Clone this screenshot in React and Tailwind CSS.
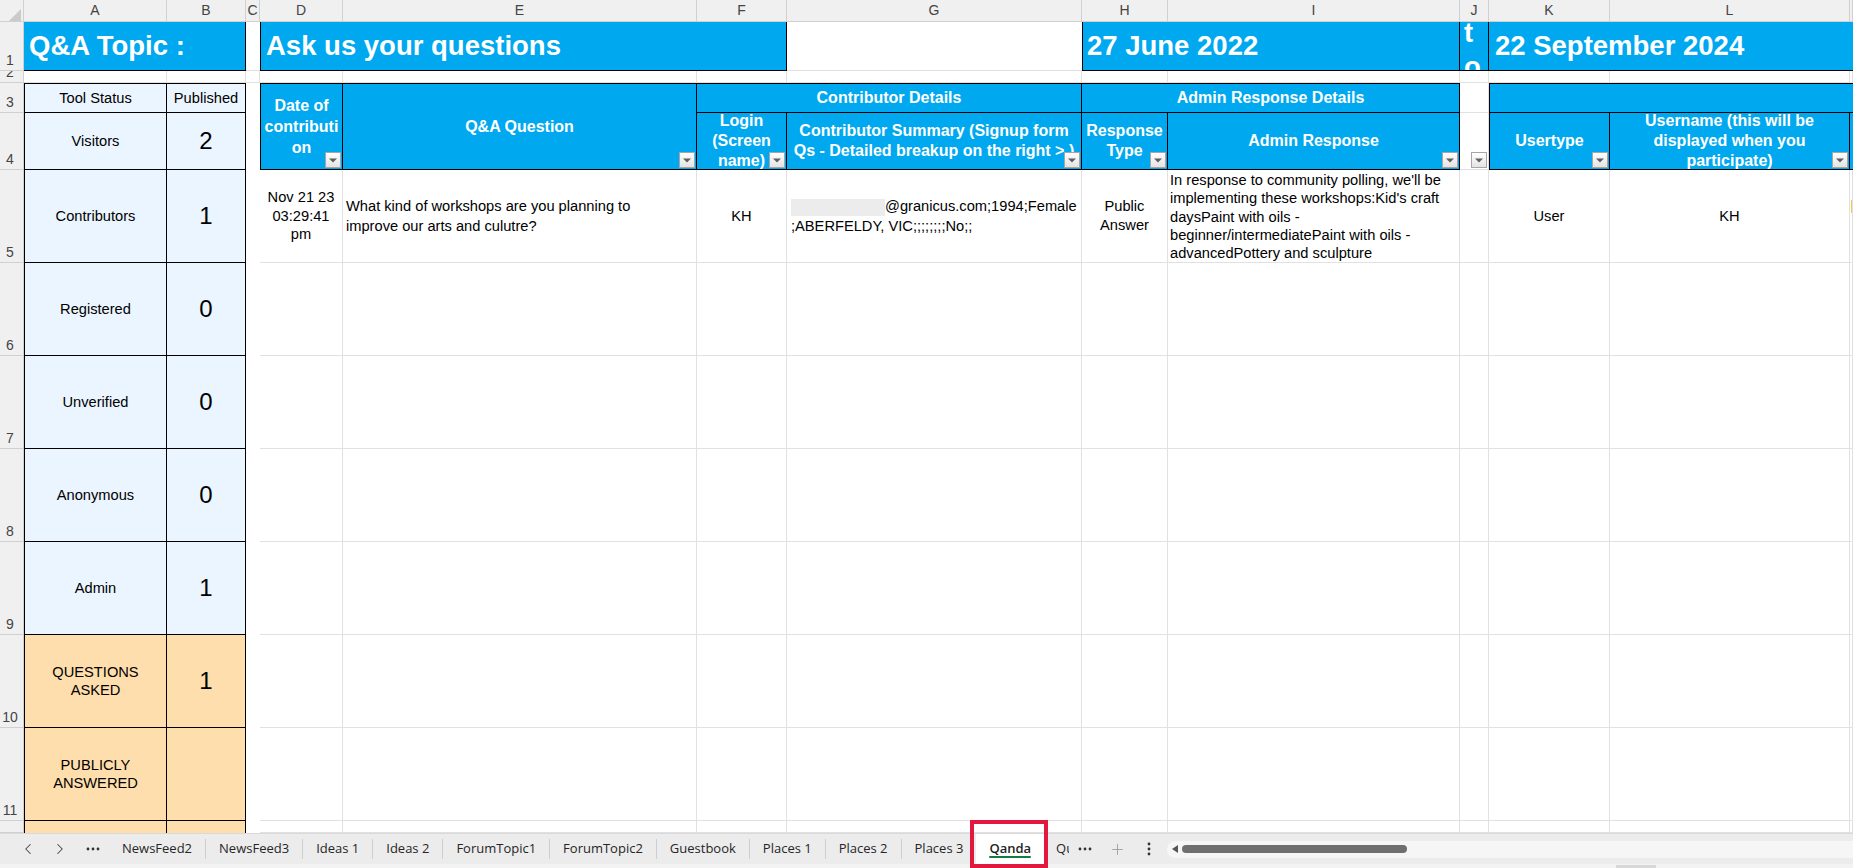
import React from "react";
import { ChevronLeft, ChevronRight, Plus } from "lucide-react";

const GRID = "border-r border-b border-[#e1e1e1]";
const BLUE = "bg-[#00a8f0] text-white border-black";
const HEAD = "bg-[#00a8f0] text-white border-black font-bold text-[16px] leading-[20px] text-center flex items-center justify-center whitespace-nowrap";

const colHeads = [
  ["A", "col-start-2"],
  ["B", "col-start-3"],
  ["C", "col-start-4"],
  ["D", "col-start-5"],
  ["E", "col-start-6"],
  ["F", "col-start-7"],
  ["G", "col-start-8"],
  ["H", "col-start-9"],
  ["I", "col-start-10"],
  ["J", "col-start-11"],
  ["K", "col-start-12"],
  ["L", "col-start-13"],
  ["", "col-start-14"],
];

const rowHeads = [
  ["1", "row-start-2"],
  ["2", "row-start-3"],
  ["3", "row-start-4"],
  ["4", "row-start-5"],
  ["5", "row-start-6"],
  ["6", "row-start-7"],
  ["7", "row-start-8"],
  ["8", "row-start-9"],
  ["9", "row-start-10"],
  ["10", "row-start-11"],
  ["11", "row-start-12"],
  ["", "row-start-13"],
];

const stats = [
  { label: "Visitors", value: "2", row: "row-start-5", bg: "bg-[#ebf5ff]" },
  { label: "Contributors", value: "1", row: "row-start-6", bg: "bg-[#ebf5ff]" },
  { label: "Registered", value: "0", row: "row-start-7", bg: "bg-[#ebf5ff]" },
  { label: "Unverified", value: "0", row: "row-start-8", bg: "bg-[#ebf5ff]" },
  { label: "Anonymous", value: "0", row: "row-start-9", bg: "bg-[#ebf5ff]" },
  { label: "Admin", value: "1", row: "row-start-10", bg: "bg-[#ebf5ff]" },
  { label: <>QUESTIONS<br />ASKED</>, value: "1", row: "row-start-11", bg: "bg-[#ffdead]" },
  { label: <>PUBLICLY<br />ANSWERED</>, value: "", row: "row-start-12", bg: "bg-[#ffdead]" },
  { label: "", value: "", row: "row-start-13", bg: "bg-[#ffdead]" },
];

const bodyRows = ["row-start-7", "row-start-8", "row-start-9", "row-start-10", "row-start-11", "row-start-12", "row-start-13"];
const bodyCols = ["col-start-5", "col-start-6", "col-start-7", "col-start-8", "col-start-9", "col-start-10", "col-start-11", "col-start-12", "col-start-13", "col-start-14"];
const row2Cols = ["col-start-2", "col-start-3", "col-start-4", "col-start-5", "col-start-6", "col-start-7", "col-start-8", "col-start-9", "col-start-10", "col-start-11", "col-start-12", "col-start-13", "col-start-14"];

const tabs = ["NewsFeed2", "NewsFeed3", "Ideas 1", "Ideas 2", "ForumTopic1", "ForumTopic2", "Guestbook", "Places 1", "Places 2", "Places 3"];

const Cell = ({ className = "", children }) => (
  <div className={`relative overflow-hidden ${className}`}>{children}</div>
);

// little autofilter dropdown in the corner of header cells
const FilterBtn = () => (
  <span className="absolute right-[1px] bottom-[1px] w-[16px] h-[16px] border border-[#a6a6a6] bg-linear-to-b from-white to-[#e4e4e4] flex items-center justify-center">
    <svg width="8" height="5" viewBox="0 0 8 5">
      <path d="M0 0.5h8L4 4.5z" fill="#5f5f5f" />
    </svg>
  </span>
);

const Dots = ({ vertical }) =>
  vertical ? (
    <svg width="4" height="14" viewBox="0 0 4 14">
      <circle cx="2" cy="2" r="1.4" fill="#333" />
      <circle cx="2" cy="7" r="1.4" fill="#333" />
      <circle cx="2" cy="12" r="1.4" fill="#333" />
    </svg>
  ) : (
    <svg width="14" height="4" viewBox="0 0 14 4">
      <circle cx="2" cy="2" r="1.4" fill="#333" />
      <circle cx="7" cy="2" r="1.4" fill="#333" />
      <circle cx="12" cy="2" r="1.4" fill="#333" />
    </svg>
  );

function TabBar() {
  return (
    <div className="flex flex-col font-['Open_Sans',sans-serif]">
      <div className="h-[31px] bg-[#ececec] border-t border-[#d9d9d9] flex items-center text-[13px] text-[#262626]">
        <div className="w-[12px]" />
        <div className="w-[32px] flex justify-center">
          <ChevronLeft size={18} strokeWidth={1.4} className="text-[#444]" />
        </div>
        <div className="w-[32px] flex justify-center">
          <ChevronRight size={18} strokeWidth={1.4} className="text-[#444]" />
        </div>
        <div className="w-[33px] flex justify-center">
          <Dots />
        </div>
        {tabs.map((t, i) => (
          <React.Fragment key={t}>
            <span className="px-[13px] whitespace-nowrap">{t}</span>
            {i < tabs.length - 1 && <span className="w-px h-[20px] bg-[#cfcfcf]" />}
          </React.Fragment>
        ))}
        <div className="relative h-full px-[13px] bg-white flex items-center font-semibold text-[#1f1f1f]">
          Qanda
          <span className="absolute left-[13px] right-[13px] bottom-[6px] h-[2px] rounded-full bg-[#107c41]" />
          <span className="absolute -left-[6px] -right-[4px] -top-[14px] -bottom-[4px] border-4 border-[#e2183f]" />
        </div>
        <div className="w-[25px] pl-[12px] overflow-hidden whitespace-nowrap">Qu</div>
        <div className="w-[32px] flex justify-center">
          <Dots />
        </div>
        <div className="w-[32px] flex justify-center">
          <Plus size={17} strokeWidth={1.2} className="text-[#9a9a9a]" />
        </div>
        <div className="w-[32px] flex justify-center">
          <Dots vertical />
        </div>
        <div className="ml-[2px] flex-1 h-[17px] bg-[#f6f6f6] rounded-l-full flex items-center pl-[5px]">
          <svg width="6" height="8" viewBox="0 0 6 8">
            <path d="M6 0v8L0 4z" fill="#555" />
          </svg>
          <span className="ml-[4px] w-[225px] h-[8px] rounded-full bg-[#6f6f6f]" />
        </div>
      </div>
      <div className="h-[4px] bg-[#f3f3f3] flex">
        <span className="ml-[1616px] w-[40px] h-[3px] mt-[1px] bg-[#d8d8d8]" />
      </div>
    </div>
  );
}

export default function App() {
  return (
    <div className="w-[1853px] h-[868px] overflow-hidden bg-white flex flex-col font-['Liberation_Sans',Arial,sans-serif] text-black">
      <div className="grid grid-cols-[24px_143px_79px_14px_83px_354px_90px_295px_86px_292px_29px_121px_240px_1fr] grid-rows-[22px_49px_12px_30px_57px_93px_93px_93px_93px_93px_93px_93px_12px] h-[833px] overflow-hidden">
        {/* corner */}
        <Cell className="col-start-1 row-start-1 bg-[#f0f0f0] border-r border-b border-[#d0d0d0]">
          <svg className="absolute left-[9px] top-[9px]" width="12" height="12" viewBox="0 0 12 12">
            <path d="M12 0v12H0z" fill="#cacaca" />
          </svg>
        </Cell>

        {/* column letters */}
        {colHeads.map(([l, c]) => (
          <Cell
            key={c}
            className={`${c} row-start-1 bg-[#f0f0f0] border-r border-b border-[#d0d0d0] flex items-center justify-center text-[14px] text-[#444]`}
          >
            {l}
          </Cell>
        ))}

        {/* row numbers */}
        {rowHeads.map(([n, r]) => (
          <Cell
            key={r}
            className={`col-start-1 ${r} bg-[#f0f0f0] border-r border-b border-[#d0d0d0] flex items-end justify-center pr-[3px] pb-[2px] text-[14px] leading-[16px] text-[#444]`}
          >
            {n}
          </Cell>
        ))}

        {/* row 1 */}
        <Cell className={`col-start-2 col-span-2 row-start-2 ${BLUE} border-r border-b flex items-center px-[5px] text-[27.5px] font-bold whitespace-nowrap`}>
          Q&amp;A Topic :
        </Cell>
        <Cell className="col-start-4 row-start-2 border-b border-[#e1e1e1]" />
        <Cell className={`col-start-5 col-span-3 row-start-2 ${BLUE} border-l border-r border-b flex items-center px-[5px] text-[27.5px] font-bold whitespace-nowrap`}>
          Ask us your questions
        </Cell>
        <Cell className="col-start-8 row-start-2 border-b border-[#e1e1e1]" />
        <Cell className={`col-start-9 col-span-2 row-start-2 ${BLUE} border-l border-r border-b flex items-center px-[4px] text-[27.5px] font-bold whitespace-nowrap`}>
          27 June 2022
        </Cell>
        <Cell className={`col-start-11 row-start-2 ${BLUE} border-r border-b`}>
          <div className="pl-[4px] -mt-[6px] leading-[34px] text-[27.5px] font-bold">
            t<br />o
          </div>
        </Cell>
        <Cell className={`col-start-12 col-span-3 row-start-2 ${BLUE} border-b flex items-center px-[6px] text-[27.5px] font-bold whitespace-nowrap`}>
          22 September 2024
        </Cell>

        {/* row 2 */}
        {row2Cols.map((c) => (
          <Cell key={c} className={`${c} row-start-3 ${GRID}`} />
        ))}

        {/* row 3 */}
        <Cell className="col-start-2 row-start-4 bg-[#ebf5ff] border-l border-t border-r border-b border-black flex items-center justify-center text-[14.67px]">
          Tool Status
        </Cell>
        <Cell className="col-start-3 row-start-4 bg-[#ebf5ff] border-t border-r border-b border-black flex items-center justify-center text-[14.67px]">
          Published
        </Cell>
        <Cell className={`col-start-5 row-start-4 row-span-2 ${HEAD} border-l border-t border-r border-b leading-[21px]`}>
          <div>
            Date of<br />contributi<br />on
          </div>
          <FilterBtn />
        </Cell>
        <Cell className={`col-start-6 row-start-4 row-span-2 ${HEAD} border-t border-r border-b`}>
          Q&amp;A Question
          <FilterBtn />
        </Cell>
        <Cell className={`col-start-7 col-span-2 row-start-4 ${HEAD} border-t border-r border-b`}>
          Contributor Details
        </Cell>
        <Cell className={`col-start-9 col-span-2 row-start-4 ${HEAD} border-t border-r border-b`}>
          Admin Response Details
        </Cell>
        <Cell className={`col-start-11 row-start-4 ${GRID}`} />
        <Cell className={`col-start-12 col-span-3 row-start-4 ${BLUE} border-l border-t border-b`} />

        {/* row 4 headers */}
        <Cell className={`col-start-7 row-start-5 ${HEAD} border-r border-b leading-[20.5px]`}>
          <div>
            Login<br />(Screen<br />name)
          </div>
          <FilterBtn />
        </Cell>
        <Cell className={`col-start-8 row-start-5 ${HEAD} border-r border-b leading-[20.5px]`}>
          <div>
            Contributor Summary (Signup form<br />Qs - Detailed breakup on the right &gt; )
          </div>
          <FilterBtn />
        </Cell>
        <Cell className={`col-start-9 row-start-5 ${HEAD} border-r border-b`}>
          <div>
            Response<br />Type
          </div>
          <FilterBtn />
        </Cell>
        <Cell className={`col-start-10 row-start-5 ${HEAD} border-r border-b`}>
          Admin Response
          <FilterBtn />
        </Cell>
        <Cell className={`col-start-11 row-start-5 ${GRID}`}>
          <FilterBtn />
        </Cell>
        <Cell className={`col-start-12 row-start-5 ${HEAD} border-l border-r border-b`}>
          Usertype
          <FilterBtn />
        </Cell>
        <Cell className={`col-start-13 row-start-5 ${HEAD} border-r border-b leading-[20.5px]`}>
          <div>
            Username (this will be<br />displayed when you<br />participate)
          </div>
          <FilterBtn />
        </Cell>
        <Cell className={`col-start-14 row-start-5 ${BLUE} border-b`} />

        {/* left stats table */}
        {stats.map((s, i) => (
          <React.Fragment key={s.row}>
            <Cell
              className={`col-start-2 ${s.row} ${s.bg} border-l border-r ${i < stats.length - 1 ? "border-b" : ""} border-black flex items-center justify-center text-center text-[14.67px] leading-[18px]`}
            >
              <div>{s.label}</div>
            </Cell>
            <Cell
              className={`col-start-3 ${s.row} ${s.bg} border-r ${i < stats.length - 1 ? "border-b" : ""} border-black flex items-center justify-center text-[24px] leading-none`}
            >
              {s.value}
            </Cell>
          </React.Fragment>
        ))}

        {/* row 5 data */}
        <Cell className={`col-start-5 row-start-6 ${GRID} flex items-center justify-center text-center text-[14.67px] leading-[18.5px]`}>
          <div>
            Nov 21 23<br />03:29:41<br />pm
          </div>
        </Cell>
        <Cell className={`col-start-6 row-start-6 ${GRID} flex items-center px-[3px] text-[14.67px] leading-[20px]`}>
          <div>
            What kind of workshops are you planning to<br />improve our arts and culutre?
          </div>
        </Cell>
        <Cell className={`col-start-7 row-start-6 ${GRID} flex items-center justify-center text-[14.67px]`}>KH</Cell>
        <Cell className={`col-start-8 row-start-6 ${GRID} flex items-center pl-[4px] text-[14.67px] leading-[20px] whitespace-nowrap`}>
          <div>
            <span className="inline-block align-middle w-[94px] h-[17px] bg-[#ececec]" />
            @granicus.com;1994;Female
            <br />
            ;ABERFELDY, VIC;;;;;;;;No;;
          </div>
        </Cell>
        <Cell className={`col-start-9 row-start-6 ${GRID} flex items-center justify-center text-center text-[14.67px] leading-[19px]`}>
          <div>
            Public<br />Answer
          </div>
        </Cell>
        <Cell className={`col-start-10 row-start-6 ${GRID} px-[2px] pt-[1px] text-[14.67px] leading-[18.3px] whitespace-nowrap`}>
          In response to community polling, we'll be
          <br />
          implementing these workshops:Kid's craft
          <br />
          daysPaint with oils -
          <br />
          beginner/intermediatePaint with oils -
          <br />
          advancedPottery and sculpture
        </Cell>
        <Cell className={`col-start-11 row-start-6 ${GRID}`} />
        <Cell className={`col-start-12 row-start-6 ${GRID} flex items-center justify-center text-[14.67px]`}>User</Cell>
        <Cell className={`col-start-13 row-start-6 ${GRID} flex items-center justify-center text-[14.67px]`}>KH</Cell>
        <Cell className={`col-start-14 row-start-6 ${GRID}`}>
          <span className="block mt-[30px] ml-[1px] w-[2px] h-[13px] bg-[#f3c84e]" />
        </Cell>

        {/* empty rows */}
        {bodyRows.map((r) =>
          bodyCols.map((c) => <Cell key={r + c} className={`${c} ${r} ${GRID}`} />)
        )}
      </div>
      <TabBar />
    </div>
  );
}
